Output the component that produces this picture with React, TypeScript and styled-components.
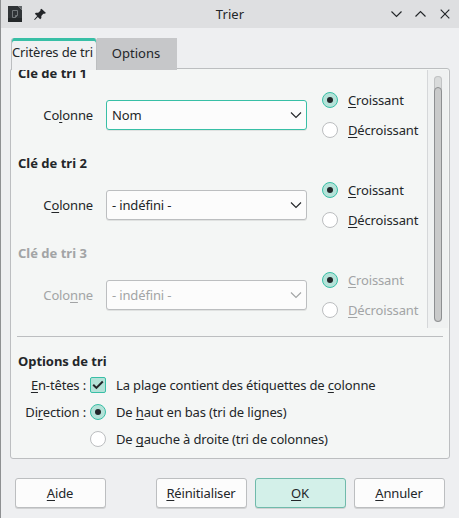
import React from "react";
import styled, { createGlobalStyle, css } from "styled-components";

const ink = "#232629";
const faded = "#a2a4a5";
const line = "#bcbec0";
const teal = "#38bfa6";
const tealFill = "#b4e2d8";

const GlobalStyle = createGlobalStyle`
  * { box-sizing: border-box; }
  body { margin: 0; background: #eeeff1; overflow: hidden; }
`;

const Window = styled.main`
  width: 459px;
  height: 518px;
  display: flex;
  flex-direction: column;
  border-left: 1px solid #8e9092;
  background: #eeeff1;
  color: ${ink};
  font: 13px/20px "Noto Sans", sans-serif;
  letter-spacing: -0.15px;
  white-space: nowrap;
`;

const TitleBar = styled.header`
  height: 28px;
  flex: none;
  display: grid;
  grid-template-columns: 1fr auto 1fr;
  align-items: center;
  background: #dedfe1;
  padding: 0 6px;
`;

const Title = styled.span`
  letter-spacing: 0.1px;
`;

const TitleIcons = styled.div`
  display: flex;
  align-items: center;
  gap: 12px;
  padding-left: 1px;
`;

const WindowControls = styled.div`
  display: flex;
  justify-content: flex-end;
  gap: 8px;
`;

const Tabs = styled.nav`
  display: flex;
  flex: none;
  height: 32px;
  margin: 10px 0 0 10px;
  position: relative;
  z-index: 1;
`;

const Tab = styled.button<{ $active?: boolean }>`
  border: 0;
  padding: 0;
  font: inherit;
  letter-spacing: inherit;
  color: inherit;
  height: 32px;
  ${(p) =>
    p.$active
      ? css`
          width: 86px;
          background: #f0f1f2;
          border: solid #bcbec0;
          border-width: 0 1px;
          box-shadow: inset 0 3px ${teal};
          border-radius: 3px 3px 0 0;
          padding-right: 4px;
          padding-bottom: 4px;
        `
      : css`
          width: 80px;
          background: #c6c7c9;
          padding: 0 2px 2px 0;
          letter-spacing: 0;
        `}
`;

const Pane = styled.section`
  flex: none;
  width: 440px;
  height: 391px;
  margin: -2px 0 0 9px;
  padding-top: 1px;
  border: 1px solid ${line};
  border-radius: 3px;
  background: #f4f6f5;
`;

const ScrollArea = styled.div`
  height: 258px;
  display: flex;
  overflow: hidden;
`;

const Keys = styled.div`
  width: 416px;
  margin-top: -7px;
`;

const Key = styled.section<{ $disabled?: boolean }>`
  height: 90px;
  padding-left: 7px;
  color: ${(p) => (p.$disabled ? faded : ink)};
`;

const Heading = styled.h2`
  margin: 0;
  height: 20px;
  font: bold 13px/20px "Noto Sans", sans-serif;
  letter-spacing: 0;
`;

const KeyBody = styled.div`
  display: grid;
  grid-template-columns: 75px 214px auto;
  align-items: center;
  height: 60px;
  margin-top: 2px;
`;

const FieldLabel = styled.label`
  text-align: right;
`;

const Combo = styled.div<{ $focus?: boolean }>`
  display: flex;
  align-items: center;
  justify-content: space-between;
  height: 30px;
  margin-left: 13px;
  padding: 0 4px 0 5px;
  border: 1px solid ${(p) => (p.$focus ? teal : line)};
  border-radius: 3px;
  background: #fcfcfc;
  box-shadow: 0 1px 0 rgba(0, 0, 0, 0.08);
`;

const RadioStack = styled.div`
  margin-left: 15px;
`;

const Choice = styled.div<{ $height: number }>`
  display: flex;
  align-items: center;
  gap: 10px;
  height: ${(p) => p.$height}px;
`;

const Mark = styled.span<{ $on?: boolean; $square?: boolean }>`
  display: grid;
  place-items: center;
  flex: none;
  width: 16px;
  height: 16px;
  border: 1px solid ${(p) => (p.$on ? teal : line)};
  border-radius: ${(p) => (p.$square ? "2px" : "50%")};
  background: ${(p) => (p.$on ? tealFill : "#fff")};
`;

const Dot = styled.span`
  width: 6px;
  height: 6px;
  border-radius: 50%;
  background: ${ink};
`;

const Access = styled.span`
  text-decoration: underline;
  text-decoration-thickness: 1px;
  text-underline-offset: 2px;
  text-decoration-skip-ink: none;
`;

const Track = styled.div`
  width: 21px;
  padding: 6px 0 6px 6px;
  border-left: 1px solid #d5d7d9;
  background: #eff1f1;
`;

const Groove = styled.div`
  width: 8px;
  height: 246px;
  padding-top: 11px;
  border-radius: 4px;
  background: #d9dbdb;
  box-shadow: inset 0 0 0 1px #c1c3c4;
`;

const Thumb = styled.div`
  height: 235px;
  border: 1px solid #8d8f91;
  border-radius: 4px;
  background: #c9caca;
`;

const Divider = styled.hr`
  height: 1px;
  margin: 8px 6px 14px;
  border: 0;
  background: ${line};
`;

const OptionsHeading = styled(Heading)`
  margin-left: 7px;
  letter-spacing: -0.05px;
`;

const OptionGrid = styled.div`
  display: grid;
  grid-template-columns: 75px auto;
  grid-auto-rows: 27px;
  column-gap: 4px;
  align-items: center;
`;

const Footer = styled.footer`
  display: flex;
  gap: 8px;
  padding: 19px 14px 0;
`;

const Button = styled.button<{ $primary?: boolean; $apart?: boolean }>`
  flex: none;
  width: 91px;
  height: 30px;
  padding: 0 1px 0 0;
  margin-right: ${(p) => (p.$apart ? "42px" : "0")};
  border: 1px solid ${(p) => (p.$primary ? "#70baab" : line)};
  border-radius: 3px;
  background: ${(p) => (p.$primary ? "#d3f0e9" : "#fcfcfc")};
  box-shadow: 0 1px 0 rgba(0, 0, 0, 0.12);
  color: ${ink};
  font: inherit;
  letter-spacing: inherit;
`;

function Label({ text }: { text: string }) {
  const [before, key, after] = text.split("_");
  return (
    <span>
      {before}
      {key && <Access>{key}</Access>}
      {after}
    </span>
  );
}

function Stroke({ d }: { d: string }) {
  return (
    <svg width="16" height="16" viewBox="0 0 16 16" fill="none" stroke="currentColor" strokeWidth="1.15">
      <path d={d} />
    </svg>
  );
}

function Radio({ text, on, height = 30 }: { text: string; on?: boolean; height?: number }) {
  return (
    <Choice $height={height}>
      <Mark $on={on}>{on && <Dot />}</Mark>
      <Label text={text} />
    </Choice>
  );
}

const sortKeys = [
  { title: "Clé de tri 1", label: "Co_l_onne", value: "Nom", focus: true, disabled: false },
  { title: "Clé de tri 2", label: "C_o_lonne", value: "- indéfini -", focus: false, disabled: false },
  { title: "Clé de tri 3", label: "Colo_n_ne", value: "- indéfini -", focus: false, disabled: true },
];

export default function App() {
  return (
    <Window>
      <GlobalStyle />
      <TitleBar>
        <TitleIcons>
          <svg width="14" height="18" viewBox="0 0 14 18">
            <path d="M0 1h10l4 4v12H0z" fill="#303437" />
            <path d="M0 13h14v4H0z" fill="#24282a" />
            <path d="M10 1h4v4z" fill="#62676a" />
            <path d="M4.5 5.5h5v5l-2 2h-3zM9.5 10.5h-2v2" fill="none" stroke="#73787b" />
          </svg>
          <svg width="13" height="13" viewBox="0 0 13 13">
            <path
              d="M7.5.8l4.5 4.2-1.5.8-1.2-.1-2 2.2.1 2.1-1.2 1.2-2.4-2.2L.8 12l-.7-.6 3.1-3.4L.8 5.8l1.1-1.1 2.3.1 2.2-2L6.4 1.6z"
              fill={ink}
            />
          </svg>
        </TitleIcons>
        <Title>Trier</Title>
        <WindowControls>
          <Stroke d="M2.5 5.5l5 5 5-5" />
          <Stroke d="M2.5 10.5l5-5 5 5" />
          <Stroke d="M3.7 3.7l8.6 8.6M12.3 3.7l-8.6 8.6" />
        </WindowControls>
      </TitleBar>
      <Tabs>
        <Tab $active>Critères de tri</Tab>
        <Tab>Options</Tab>
      </Tabs>
      <Pane>
        <ScrollArea>
          <Keys>
            {sortKeys.map((k) => (
              <Key key={k.title} $disabled={k.disabled}>
                <Heading>{k.title}</Heading>
                <KeyBody>
                  <FieldLabel>
                    <Label text={k.label} />
                  </FieldLabel>
                  <Combo $focus={k.focus}>
                    <span>{k.value}</span>
                    <svg width="12" height="8" viewBox="0 0 12 8" fill="none" stroke="currentColor" strokeWidth="1.15">
                      <path d="M1 1.5l5 5 5-5" />
                    </svg>
                  </Combo>
                  <RadioStack>
                    <Radio text="_C_roissant" on />
                    <Radio text="_D_écroissant" />
                  </RadioStack>
                </KeyBody>
              </Key>
            ))}
          </Keys>
          <Track>
            <Groove>
              <Thumb />
            </Groove>
          </Track>
        </ScrollArea>
        <Divider />
        <OptionsHeading>Options de tri</OptionsHeading>
        <OptionGrid>
          <FieldLabel>
            <Label text="_E_n-têtes :" />
          </FieldLabel>
          <Choice $height={27}>
            <Mark $on $square>
              <svg width="12" height="10" viewBox="0 0 12 10" fill="none" stroke={ink} strokeWidth="2">
                <path d="M1.2 4.7l3.2 3.2 6.4-6.4" />
              </svg>
            </Mark>
            <Label text="La plage contient des étiquettes de _c_olonne" />
          </Choice>
          <FieldLabel>
            <Label text="Di_r_ection :" />
          </FieldLabel>
          <Radio text="De _h_aut en bas (tri de lignes)" on height={27} />
          <span />
          <Radio text="De _g_auche à droite (tri de colonnes)" height={27} />
        </OptionGrid>
      </Pane>
      <Footer>
        <Button $apart>
          <Label text="_A_ide" />
        </Button>
        <Button>
          <Label text="_R_éinitialiser" />
        </Button>
        <Button $primary>
          <Label text="_O_K" />
        </Button>
        <Button>
          <Label text="_A_nnuler" />
        </Button>
      </Footer>
    </Window>
  );
}
